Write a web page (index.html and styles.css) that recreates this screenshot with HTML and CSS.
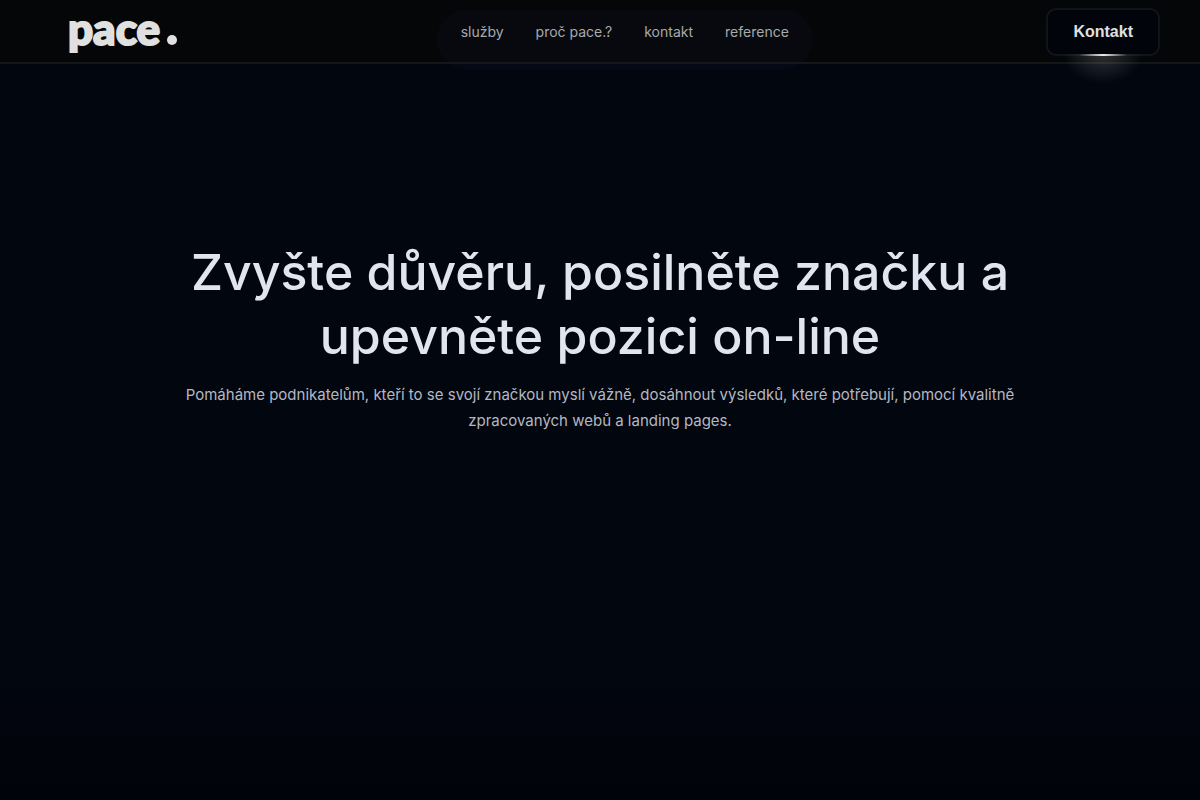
FILE: index.html
```html
<!DOCTYPE html>
<html lang="cs">
<head>
<meta charset="utf-8">
<meta name="viewport" content="width=device-width, initial-scale=1">
<title>pace.</title>
<link rel="stylesheet" href="styles.css">
</head>
<body>
<header class="site-header">
  <a class="logo" href="#">pace<svg class="logo-dot" viewBox="0 0 10 10" aria-hidden="true"><circle cx="5" cy="5" r="5" fill="currentColor"/></svg></a>
  <nav class="nav">
    <a href="#sluzby">služby</a>
    <a href="#proc">proč pace.?</a>
    <a href="#kontakt">kontakt</a>
    <a href="#reference">reference</a>
  </nav>
  <button class="contact" type="button">Kontakt</button>
</header>
<main class="hero">
  <h1 class="title">Zvyšte důvěru, posilněte značku a upevněte pozici on-line</h1>
  <p class="lead">Pomáháme podnikatelům, kteří to se svojí značkou myslí vážně, dosáhnout výsledků, které potřebují, pomocí kvalitně zpracovaných webů a landing pages.</p>
</main>
</body>
</html>
```
FILE: styles.css
```css
* {
  box-sizing: border-box;
}

body {
  margin: 0;
  min-height: 100vh;
  background: linear-gradient(#02060f 0, #02060f 80%, #01030a 100%);
  color: #e2e5ef;
  font-family: Inter, "Liberation Sans", sans-serif;
}

.site-header {
  display: flex;
  align-items: flex-start;
  justify-content: space-between;
  height: 64px;
  padding: 8px 40px 0 68px;
  background: #050608;
  border-bottom: 2px solid #151618;
}

.logo {
  width: 135px;
  color: #e0e0e0;
  font-family: Lato, sans-serif;
  font-size: 44px;
  font-weight: 900;
  line-height: 40px;
  text-decoration: none;
  -webkit-text-stroke: 2px #e0e0e0;
}

.logo-dot {
  width: 10px;
  height: 10px;
  margin-left: 7px;
}

.nav {
  display: flex;
  gap: 32px;
  margin-top: 2px;
  padding: 12px 24px 27px;
  border-radius: 30px;
  background: rgba(16, 30, 52, 0.18);
}

.nav a {
  color: #a8a9ab;
  font-size: 14px;
  line-height: 20px;
  text-decoration: none;
}

.contact {
  position: relative;
  height: 48px;
  padding: 0 25px;
  border: 2px solid #131417;
  border-radius: 10px;
  background: #02040c;
  color: #e0e0e0;
  font-family: "Liberation Sans", Arial, sans-serif;
  font-size: 16px;
  font-weight: 700;
}

.contact::before,
.contact::after {
  content: "";
  position: absolute;
  left: 50%;
  transform: translateX(-50%);
}

.contact::before {
  bottom: -2px;
  width: 48px;
  height: 2px;
  background: linear-gradient(90deg, transparent, #e8e8e8, transparent);
}

.contact::after {
  top: 100%;
  width: 80px;
  height: 30px;
  background: radial-gradient(ellipse at top, rgba(255, 255, 255, 0.17), transparent 70%);
}

.hero {
  max-width: 888px;
  margin: 0 auto;
  padding: 176px 24px 48px;
  text-align: center;
}

.title {
  margin: 0;
  font-size: 50px;
  font-weight: 500;
  line-height: 64px;
}

.lead {
  margin: 14px 0 0;
  color: #b5b8c2;
  font-size: 15px;
  line-height: 26px;
}
```
